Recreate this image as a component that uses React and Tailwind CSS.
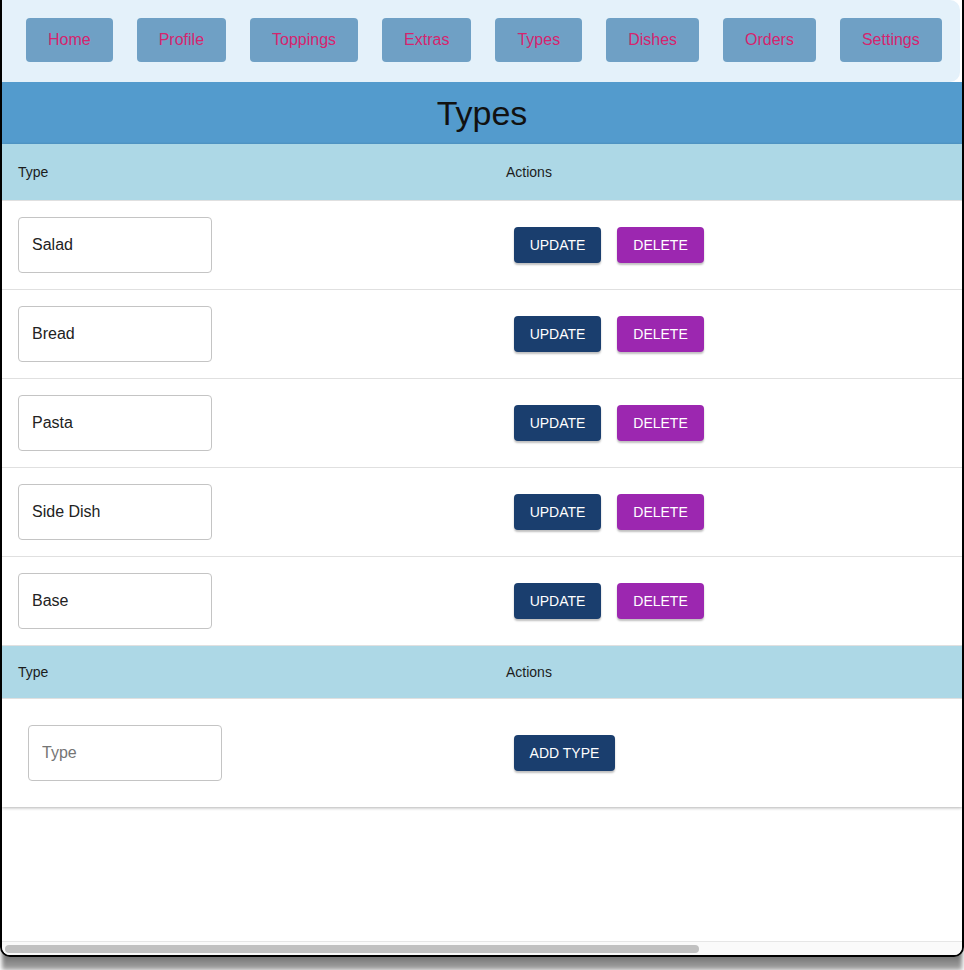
import React, { useState } from 'react'

const navItems = ['Home', 'Profile', 'Toppings', 'Extras', 'Types', 'Dishes', 'Orders', 'Settings']
const initialTypes = ['Salad', 'Bread', 'Pasta', 'Side Dish', 'Base']

const HeaderRow = ({ tall }) => (
  <div
    className={`grid grid-cols-[488px_1fr] bg-[#add8e6] border-b border-[#e0e0e0] text-[14px] text-[#1c1c1c] ${
      tall ? 'h-[57px]' : 'h-[53px]'
    }`}
  >
    <div className="flex items-center px-4">Type</div>
    <div className="flex items-center px-4">Actions</div>
  </div>
)

const App = () => {
  const [types, setTypes] = useState(initialTypes)
  const [newType, setNewType] = useState('')

  return (
    <div className="w-[964px] h-[970px] bg-white font-['Liberation_Sans',Arial,sans-serif] flex flex-col">
      <div className="relative z-10 w-[964px] h-[957px] border-2 border-black border-t-0 rounded-b-[10px] overflow-hidden flex flex-col bg-white">
        <div className="flex-1 overflow-hidden">
          {/* nav */}
          <nav className="flex items-center gap-6 bg-[#e4f1fa] h-[82px] pl-6 pb-[2px] rounded-r-[10px] mr-[2px]">
            {navItems.map((item) => (
              <button
                key={item}
                className="h-[44px] px-[22px] rounded-[4px] bg-[#6fa0c5] text-[#d6246e] text-[16px]"
              >
                {item}
              </button>
            ))}
          </nav>

          {/* title */}
          <div className="h-[62px] bg-[#539bcd] flex items-center justify-center">
            <h1 className="text-[34px] text-[#111]">Types</h1>
          </div>

          {/* table */}
          <div className="shadow-[0_1px_3px_rgba(0,0,0,0.3)]">
            <HeaderRow tall />
            {types.map((t, i) => (
              <div key={i} className="grid grid-cols-[488px_1fr] h-[89px] border-b border-[#e0e0e0]">
                <div className="flex items-center px-4">
                  <input
                    className="w-[194px] h-[56px] border border-[#c4c4c4] rounded-[4px] px-[13px] text-[16px] text-[#222] outline-none"
                    value={t}
                    onChange={(e) => setTypes(types.map((x, j) => (j === i ? e.target.value : x)))}
                  />
                </div>
                <div className="flex items-center px-4">
                  <button className="mx-2 w-[87px] h-[36px] rounded-[4px] bg-[#1a3e6e] text-white text-[14px] shadow-[0_2px_2px_rgba(0,0,0,0.25)]">
                    UPDATE
                  </button>
                  <button
                    className="mx-2 w-[87px] h-[36px] rounded-[4px] bg-[#9c27b0] text-white text-[14px] shadow-[0_2px_2px_rgba(0,0,0,0.25)]"
                    onClick={() => setTypes(types.filter((_, j) => j !== i))}
                  >
                    DELETE
                  </button>
                </div>
              </div>
            ))}
            <HeaderRow />
            <div className="grid grid-cols-[488px_1fr] h-[108px]">
              <div className="flex items-center px-4">
                <input
                  className="ml-[10px] w-[194px] h-[56px] border border-[#c4c4c4] rounded-[4px] px-[13px] text-[16px] text-[#222] placeholder:text-[#757575] outline-none"
                  placeholder="Type"
                  value={newType}
                  onChange={(e) => setNewType(e.target.value)}
                />
              </div>
              <div className="flex items-center px-4">
                <button
                  className="mx-2 w-[101px] h-[36px] rounded-[4px] bg-[#1a3e6e] text-white text-[14px] shadow-[0_2px_2px_rgba(0,0,0,0.25)]"
                  onClick={() => {
                    if (newType) setTypes([...types, newType])
                    setNewType('')
                  }}
                >
                  ADD TYPE
                </button>
              </div>
            </div>
          </div>
        </div>

        {/* horizontal scrollbar */}
        <div className="h-[14px] bg-[#fafafa] border-t border-[#e6e6e6] flex items-center px-[3px]">
          <div className="w-[694px] h-[8px] rounded-full bg-[#c1c1c1]" />
        </div>
      </div>

      {/* window drop shadow */}
      <div className="-mt-[10px] h-[23px] bg-gradient-to-b from-[#555] to-[#a8a8a8] blur-[2px] mx-[2px]" />
    </div>
  )
}

export default App
